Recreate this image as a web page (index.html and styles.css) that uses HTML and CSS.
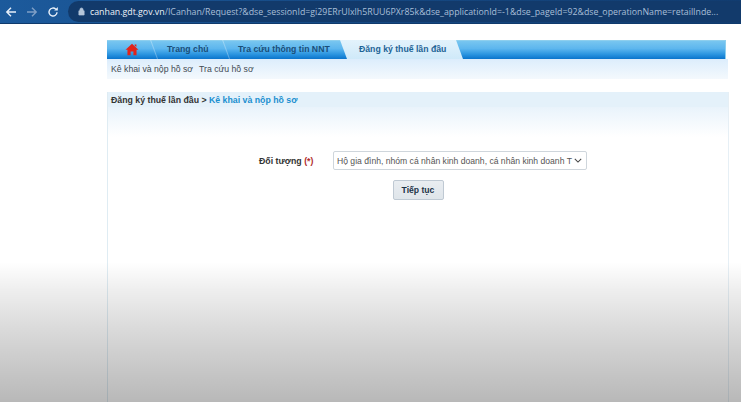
FILE: index.html
```html
<!DOCTYPE html>
<html lang="vi">
<head>
  <meta charset="UTF-8">
  <title>Đăng ký thuế lần đầu</title>
  <link rel="stylesheet" href="styles.css">
</head>
<body>
  <header class="toolbar">
    <svg class="nav-icon" viewBox="0 0 12 12"><path d="M11 6H2M6 1.8 1.8 6 6 10.2" fill="none" stroke="#e8f0fa" stroke-width="1.4"/></svg>
    <svg class="nav-icon nav-off" viewBox="0 0 12 12"><path d="M1 6h9M6 1.8 10.2 6 6 10.2" fill="none" stroke="#7f9fc6" stroke-width="1.4"/></svg>
    <svg class="nav-icon" viewBox="0 0 12 12"><path d="M10 6.2A4 4 0 1 1 8.8 3.2" fill="none" stroke="#e8f0fa" stroke-width="1.4"/><path d="M7.2 4.6h3.6V1z" fill="#e8f0fa"/></svg>
    <div class="address">
      <svg class="lock" viewBox="0 0 8 10"><path d="M1 4.2h6V9H1zM2.2 4.2V2.8a1.8 1.8 0 0 1 3.6 0v1.4" fill="#b5c6da" stroke="#b5c6da" stroke-width=".8"/></svg>
      <span class="url"><span class="host">canhan.gdt.gov.vn</span>/ICanhan/Request?&amp;dse_sessionId=gi29ERrUlxlh5RUU6PXr85k&amp;dse_applicationId=-1&amp;dse_pageId=92&amp;dse_operationName=retailInde...</span>
    </div>
  </header>

  <main class="page">
    <nav class="menu">
      <a class="menu-item home">
        <svg viewBox="0 0 16 14" width="14" height="13"><path d="M8 .5 .6 7.2h2.2V13.5h3.6V9.4h3.2v4.1h3.6V7.2h2.2z" fill="#e2231a"/><path d="M11 1.2h2v3l-2-1.8z" fill="#e2231a"/></svg>
      </a>
      <a class="menu-item home-link">Trang chủ</a>
      <a class="menu-item lookup">Tra cứu thông tin NNT</a>
      <a class="menu-item active">Đăng ký thuế lần đầu</a>
      <span class="menu-fill"></span>
    </nav>
    <div class="submenu">
      <a>Kê khai và nộp hồ sơ</a>
      <a>Tra cứu hồ sơ</a>
    </div>

    <section class="panel">
      <div class="crumb">Đăng ký thuế lần đầu &gt; <span class="crumb-now">Kê khai và nộp hồ sơ</span></div>
      <div class="panel-fade"></div>
      <form class="form">
        <div class="form-row">
          <label class="form-label">Đối tượng <span class="req">(*)</span></label>
          <div class="select">
            <span class="select-text">Hộ gia đình, nhóm cá nhân kinh doanh, cá nhân kinh doanh T</span>
            <svg viewBox="0 0 10 6" width="8" height="5"><path d="M1 1l4 4 4-4" fill="none" stroke="#444" stroke-width="1.3"/></svg>
          </div>
        </div>
        <button class="btn" type="button">Tiếp tục</button>
      </form>
    </section>
  </main>

  <div class="shade"></div>
</body>
</html>
```

FILE: styles.css
```css
html, body {
  margin: 0;
  height: 402px;
  overflow: hidden;
  background: #fff;
}
body {
  font-family: "Liberation Sans", Arial, sans-serif;
  color: #333;
}
a {
  color: inherit;
}

/* browser bar */
.toolbar {
  height: 24px;
  display: flex;
  align-items: center;
  padding-left: 5px;
  box-sizing: border-box;
  background: linear-gradient(90deg, #1c5a9c, #164a85 45%, #113c70);
  border-bottom: 1px solid #0f3a6c;
}
.nav-icon {
  width: 12px;
  height: 12px;
  margin-right: 9px;
  flex: none;
}
.address {
  flex: 1;
  height: 21px;
  display: flex;
  align-items: center;
  padding-left: 10px;
  border-radius: 11px 0 0 11px;
  background: #123a6b;
  overflow: hidden;
}
.lock {
  width: 7px;
  height: 9px;
  flex: none;
  margin-right: 5px;
}
.url {
  font-family: "Open Sans", Roboto, sans-serif;
  font-size: 8.8px;
  color: #a9bfd8;
  white-space: nowrap;
}
.host {
  color: #eef3f9;
}

/* page */
.page {
  padding: 16px 12px 0 107px;
}
.menu {
  width: 619px;
  height: 19px;
  display: flex;
  align-items: center;
  font-size: 8.7px;
  font-weight: bold;
  color: #1a4e78;
  background: linear-gradient(180deg, #7cc8f0 0, #5db6ee 45%, #2b95e0 75%, #0a74cc);
  box-shadow: inset 0 1px 0 #8ecfee, inset -1px 0 0 #8ecfee;
}
.menu-item {
  height: 19px;
  line-height: 18px;
  box-sizing: border-box;
  white-space: nowrap;
  flex: none;
}
.home {
  width: 42px;
  padding-left: 18px;
  display: flex;
  align-items: center;
}
.home-link, .lookup {
  background: linear-gradient(70deg, transparent 7px, rgba(255,255,255,.3) 8px, transparent 9px);
}
.home-link {
  width: 72px;
  padding-left: 18px;
}
.lookup {
  width: 119px;
  padding-left: 17px;
}
.active {
  width: 123px;
  padding-left: 19px;
  color: #1d6496;
  background: linear-gradient(180deg, #e3f3fc, #cfe9f9);
  clip-path: polygon(0 0, 116px 0, 100% 100%, 7px 100%);
}
.menu-fill {
  flex: 1;
}
.submenu {
  width: 621px;
  height: 20px;
  display: flex;
  align-items: center;
  gap: 6px;
  padding-left: 4px;
  box-sizing: border-box;
  font-size: 8.7px;
  color: #3f4a52;
  background: linear-gradient(180deg, #dcedfc, #f4f9fd);
}

.panel {
  width: 622px;
  height: 310px;
  margin-top: 13px;
  border-left: 1px solid #dfecf3;
  border-right: 1px solid #e6eff5;
  box-sizing: border-box;
}
.crumb {
  height: 15px;
  line-height: 16px;
  padding-left: 3px;
  font-size: 8.75px;
  font-weight: bold;
  color: #333;
  background: #e4f1fa;
}
.crumb-now {
  color: #1b8fd0;
}
.panel-fade {
  height: 30px;
  background: linear-gradient(180deg, #e9f3fb, #fff);
}
.form {
  display: flex;
  flex-direction: column;
  align-items: center;
}
.form-row {
  display: flex;
  align-items: center;
  margin: 14px 0 0 10px;
}
.form-label {
  width: 74px;
  font-size: 8.75px;
  font-weight: bold;
  color: #333;
}
.req {
  color: #b02a2a;
}
.select {
  width: 254px;
  height: 19px;
  display: flex;
  align-items: center;
  justify-content: space-between;
  padding: 0 4px 0 3px;
  box-sizing: border-box;
  border: 1px solid #cfd6dc;
  border-radius: 2px;
  font-size: 8.6px;
  color: #555;
  background: #fff;
  white-space: nowrap;
}
.btn {
  margin-top: 10px;
  width: 51px;
  height: 20px;
  padding: 0;
  font: bold 8.6px "Liberation Sans", Arial, sans-serif;
  color: #1c3347;
  background: linear-gradient(180deg, #e9edf1, #dfe5ea);
  border: 1px solid #bfc9d3;
  border-radius: 2px;
}

/* dark fade at the bottom of the video frame */
.shade {
  position: absolute;
  left: 0;
  right: 0;
  top: 262px;
  height: 140px;
  pointer-events: none;
  background: linear-gradient(180deg, rgba(0,0,0,0), rgba(0,0,0,.065) 20%, rgba(0,0,0,.15) 49%, rgba(0,0,0,.28));
}
```
